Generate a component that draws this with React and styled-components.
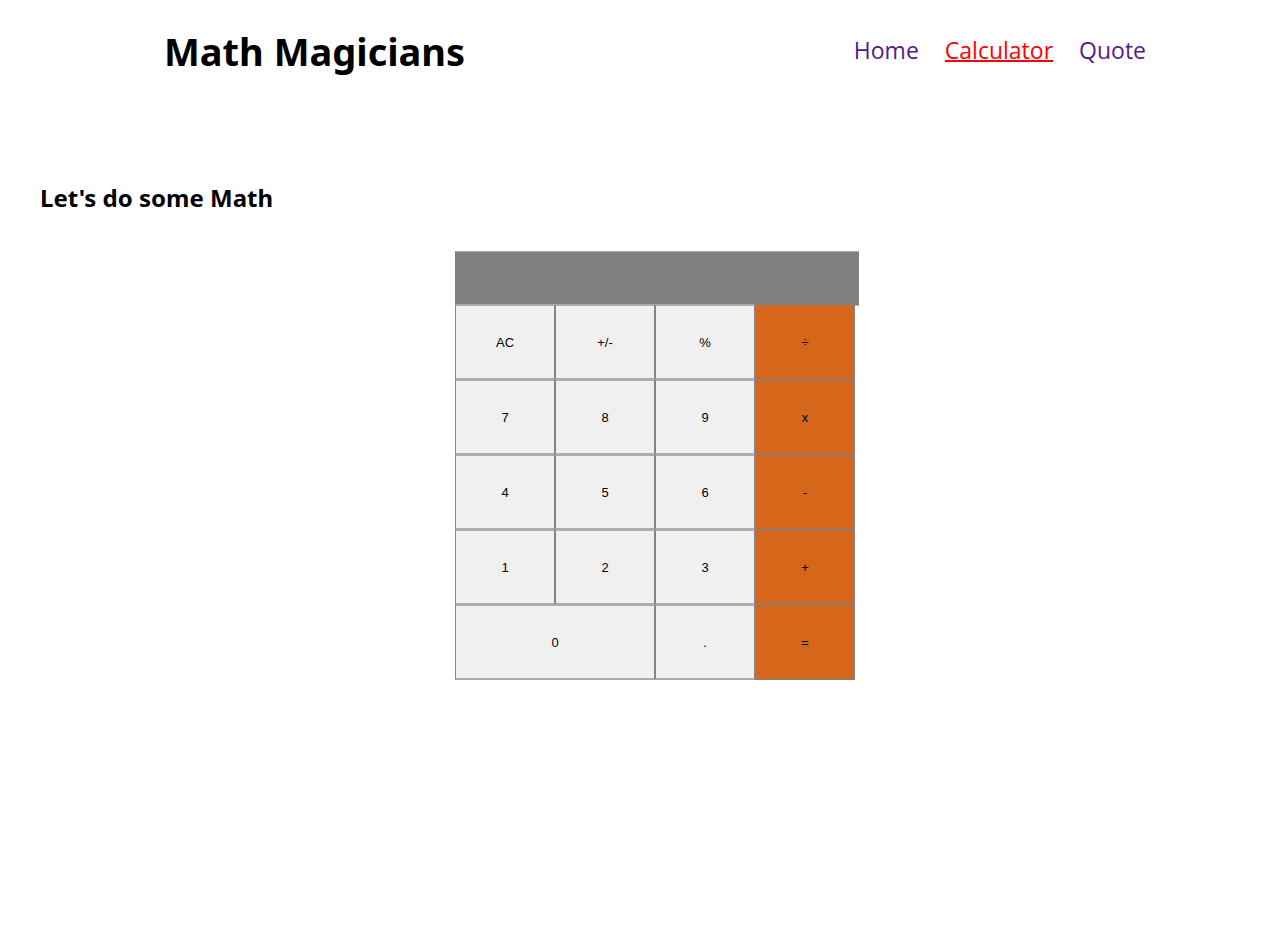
import React from "react";
import styled, { createGlobalStyle } from "styled-components";

const GlobalStyle = createGlobalStyle`
  * { box-sizing: border-box; }
  body {
    margin: 0;
    background: #fff;
    color: #000;
    font-family: "Open Sans", "Noto Sans", sans-serif;
  }
`;

const Header = styled.header`
  display: flex;
  justify-content: space-between;
  align-items: flex-start;
  padding: 25px 136px 27px 164px;
`;

const Logo = styled.h1`
  margin: 0;
  font-family: "Noto Sans", sans-serif;
  font-size: 38px;
  line-height: 52px;
  font-weight: 700;
`;

const Nav = styled.nav`
  display: flex;
  gap: 26px;
  padding-top: 9px;
`;

const NavLink = styled.a`
  color: ${(p) => (p.$active ? "#f00" : "#551a8b")};
  font-size: 23px;
  line-height: 32px;
  text-decoration: ${(p) => (p.$active ? "underline" : "none")};
  text-decoration-thickness: 2px;
`;

const Main = styled.main`
  padding: 78px 40px 40px;
`;

const Title = styled.h2`
  margin: 0 0 37px;
  font-family: "Noto Sans", sans-serif;
  font-size: 24px;
  line-height: 32px;
  font-weight: 700;
`;

const CalculatorArea = styled.section`
  display: flex;
  justify-content: center;
  padding-left: 28px;
`;

const Calculator = styled.div`
  width: 400px;
`;

const Display = styled.output`
  display: block;
  width: 404px;
  height: 55px;
  border: 1px solid #808080;
  border-top-color: #b0b0b0;
  border-bottom-color: #b0b0b0;
  background: #808080;
`;

const Keys = styled.div`
  display: grid;
  grid-template-columns: repeat(4, 1fr);
  grid-auto-rows: 75px;
  margin-top: -2px;
`;

const Key = styled.button`
  grid-column: span ${(p) => (p.$wide ? 2 : 1)};
  margin: 0 0 -1px;
  padding: 0;
  border: solid;
  border-width: 2px 1px;
  border-color: rgba(128, 128, 128, 0.6) #848484;
  border-radius: 0;
  background: ${(p) => (p.$operator ? "#d6671a" : "#f0f0f0")};
  color: #000;
  font-family: "Liberation Sans", Arial, sans-serif;
  font-size: 13px;
`;

const OPERATORS = ["÷", "x", "-", "+", "="];
const KEYS = ["AC", "+/-", "%", "÷", "7", "8", "9", "x", "4", "5", "6", "-", "1", "2", "3", "+", "0", ".", "="];

export default function App() {
  return (
    <>
      <GlobalStyle />
      <Header>
        <Logo>Math Magicians</Logo>
        <Nav>
          <NavLink href="#home">Home</NavLink>
          <NavLink href="#calculator" $active>Calculator</NavLink>
          <NavLink href="#quote">Quote</NavLink>
        </Nav>
      </Header>
      <Main>
        <Title>Let's do some Math</Title>
        <CalculatorArea>
          <Calculator>
            <Display aria-label="Result" />
            <Keys>
              {KEYS.map((k) => (
                <Key key={k} type="button" $wide={k === "0"} $operator={OPERATORS.includes(k)}>{k}</Key>
              ))}
            </Keys>
          </Calculator>
        </CalculatorArea>
      </Main>
    </>
  );
}
